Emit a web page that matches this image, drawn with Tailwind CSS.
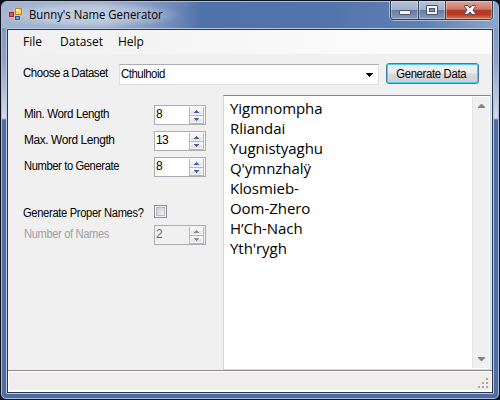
<!DOCTYPE html>
<html lang="en">
<head>
<meta charset="utf-8">
<title>Bunny's Name Generator</title>
<script src="https://cdn.jsdelivr.net/npm/@tailwindcss/browser@4"></script>
</head>
<body class="bg-[#10131c] w-[500px] h-[400px] overflow-hidden font-['Liberation_Sans',Arial,sans-serif] text-[12px] text-black">
<svg class="hidden">
  <symbol id="spin" viewBox="0 0 15 17">
    <rect x="0" y="0" width="15" height="17" fill="#b4b6ba"/>
    <rect x="1" y="0" width="13" height="8" fill="#f6f6f7"/>
    <rect x="1" y="9" width="13" height="7" fill="#f6f6f7"/>
    <rect x="2" y="4" width="11" height="3" fill="#e4e5e8"/>
    <rect x="2" y="12" width="11" height="3" fill="#e4e5e8"/>
    <path d="M7 3h1v1h1v1h1v1H5V5h1V4h1zM5 11h5v1H9v1H8v1H7v-1H6v-1H5z" fill="currentColor"/>
  </symbol>
</svg>
<div class="w-[500px] h-[400px] rounded-t-[7px] rounded-b-[6px] border border-[#10131c] bg-[#4d6da3] overflow-hidden">
<div class="w-[498px] h-[398px] rounded-t-[6px] rounded-b-[5px] border border-[#a9bddb] bg-[linear-gradient(to_bottom,#7e9bc7_0,#829bc4_28px,#8fa2c6_60px,#d5dce9_116px,#4d6da3_118px,#4d6da3_100%)] flex flex-col">
  <header class="h-[26px] flex items-start rounded-t-[5px] bg-[linear-gradient(to_right,#a3b5d1_0,#9fb1ce_100px,#7690bd_165px,#4f71aa_200px,#5375ad_330px,#5f80b5_420px,#8ba5ca_496px)]">
    <div class="w-[180px] h-[26px] pl-[7px] flex items-center bg-[radial-gradient(ellipse_at_50%_50%,#ffffff66_0,#ffffff44_45%,#ffffff00_72%)]">
      <svg class="w-[14px] h-[14px] shrink-0" viewBox="0 0 14 14">
        <rect x="0" y="0" width="14" height="13" fill="#c3c7cc"/>
        <path d="M0 0h5v4H0zM0 10h5v3H0zM12 9h2v4h-2z" fill="#b3b6ba"/>
        <rect x="0" y="4" width="5" height="5" fill="#a82020"/><rect x="1" y="5" width="3" height="3" fill="#dc5a4e"/>
        <rect x="6" y="0" width="7" height="7" fill="#bb8a16"/><rect x="7" y="1" width="5" height="5" fill="#fbd55b"/><rect x="7" y="1" width="3" height="2" fill="#fff0a8"/>
        <rect x="6" y="8" width="5" height="4" fill="#2457b5"/><rect x="7" y="9" width="3" height="2" fill="#6e9df0"/>
      </svg>
      <h1 class="ml-[6px] text-[12px] leading-[16px] origin-left scale-x-[.945] whitespace-nowrap font-['Open_Sans','Noto_Sans',sans-serif]">Bunny's Name Generator</h1>
    </div>
    <div class="ml-[208px] -mt-px flex h-[19px] w-[103px] border border-t-0 border-[#333e55] rounded-b-[4px] shadow-[0_0_0_1px_#ffffff77] overflow-hidden">
      <div class="w-[28px] border-r border-[#3c4963] bg-[linear-gradient(to_bottom,#b6c4d8_0,#a0b0cb_48%,#67799c_50%,#879dbd_100%)] shadow-[inset_0_0_0_1px_#ffffff55]">
        <svg width="27" height="18"><rect x="8.5" y="9.5" width="11" height="4" rx=".7" fill="#f5f5f5" stroke="#4b546b"/></svg>
      </div>
      <div class="w-[27px] border-r border-[#3c4963] bg-[linear-gradient(to_bottom,#b6c4d8_0,#a0b0cb_48%,#67799c_50%,#879dbd_100%)] shadow-[inset_0_0_0_1px_#ffffff55]">
        <svg width="26" height="18"><path d="M7.500 4.500h11v9h-11z" fill="#f5f5f5" stroke="#4b546b"/><rect x="10.500" y="7.500" width="5" height="3" fill="#8294b3" stroke="#4b546b"/></svg>
      </div>
      <div class="flex-1 bg-[linear-gradient(to_bottom,#dfa498_0,#cf7868_46%,#b63a27_50%,#b23c25_75%,#d67c59_100%)] shadow-[inset_0_0_0_1px_#ffffff55]">
        <svg width="46" height="18"><path d="M18.500 4.500h3.500l2 2.500 2-2.500h3.500v1L27 9l2.500 3.500v1H26l-2-2.500-2 2.500h-3.500v-1L21 9l-2.500-3.500z" fill="#f7f5f5" stroke="#51475a"/></svg>
      </div>
    </div>
  </header>
  <main class="mx-[4px] mb-[4px] h-[366px] border border-[#b9c9df] rounded-[1px]">
  <div class="h-[364px] border border-[#29344b] bg-[#f0f0f0] flex flex-col">
    <nav class="h-[24px] shrink-0 flex items-center pl-[15px] bg-[linear-gradient(to_right,#f0f0f0,#fcfcfc_80%)] font-['Open_Sans','Noto_Sans',sans-serif] text-[12px]">
      <span class="w-[37px]">File</span><span class="w-[58px]">Dataset</span><span>Help</span>
    </nav>
    <div class="h-[41px] shrink-0 flex pl-[15px] pt-[9px]">
      <label class="w-[96px] pt-[2px] leading-[16px] tracking-[-0.45px] origin-left scale-x-[.955] whitespace-nowrap">Choose a Dataset</label>
      <div class="w-[260px] h-[21px] mt-px bg-white border border-[#dedfe2] border-t-[#abadb3] flex items-start justify-between pl-px pr-[4px]">
        <span class="leading-[18px] tracking-[-0.5px] origin-left scale-x-[.95]">Cthulhoid</span>
        <svg class="mt-[8px]" width="8" height="4"><path d="M0 0h7v1H6v1H5v1H4v1H3V3H2V2H1V1H0z"/></svg>
      </div>
      <button class="ml-[7px] w-[93px] h-[21px] rounded-[3px] border border-[#3c7fb1] shadow-[inset_0_0_0_1px_#48cdf2] bg-[linear-gradient(to_bottom,#f2f2f2_0,#ebebeb_48%,#dadada_52%,#cfcfcf_100%)] leading-[18px] tracking-[-0.33px] whitespace-nowrap"><span class="inline-block -ml-[3px] scale-x-[.94]">Generate Data</span></button>
    </div>
    <div class="flex h-[275px] shrink-0">
      <section class="w-[215px] pl-[16px] pt-[10px]">
        <div class="flex h-[26px]"><label class="w-[130px] pt-px leading-[16px] tracking-[-0.4px]"><span class="inline-block origin-left scale-x-[.965]">Min. Word Length</span></label>
          <div class="w-[52px] h-[20px] bg-white border border-[#abadb3] flex justify-between pl-px pr-px pt-px"><span class="leading-[15px]">8</span><svg class="w-[15px] h-[17px] text-[#4a5fa5]"><use href="#spin"/></svg></div></div>
        <div class="flex h-[26px]"><label class="w-[130px] pt-px leading-[16px] tracking-[-0.4px]"><span class="inline-block origin-left scale-x-[.99]">Max. Word Length</span></label>
          <div class="w-[52px] h-[20px] bg-white border border-[#abadb3] flex justify-between pl-px pr-px pt-px"><span class="leading-[15px] tracking-[-0.6px]">13</span><svg class="w-[15px] h-[17px] text-[#4a5fa5]"><use href="#spin"/></svg></div></div>
        <div class="flex h-[46px]"><label class="w-[130px] pt-px leading-[16px] tracking-[-0.4px]"><span class="inline-block origin-left scale-x-[.93]">Number to Generate</span></label>
          <div class="w-[52px] h-[20px] bg-white border border-[#abadb3] flex justify-between pl-px pr-px pt-px"><span class="leading-[15px]">8</span><svg class="w-[15px] h-[17px] text-[#4a5fa5]"><use href="#spin"/></svg></div></div>
        <div class="flex h-[22px] -ml-px pt-[2px]"><label class="w-[131px] leading-[16px] tracking-[-0.35px] whitespace-nowrap"><span class="inline-block origin-left scale-x-[.93]">Generate Proper Names?</span></label>
          <div class="w-[13px] h-[13px] border border-[#8e8f8f] bg-[#f4f4f4] p-px"><div class="w-[9px] h-[9px] border border-[#b5b9c0] bg-[linear-gradient(135deg,#c8ccd3,#f5f5f5)]"></div></div></div>
        <div class="flex h-[26px] text-[#a0a0a0]"><label class="w-[130px] pt-px leading-[16px] tracking-[-0.4px]"><span class="inline-block origin-left scale-x-[.93]">Number of Names</span></label>
          <div class="w-[52px] h-[20px] border border-[#abadb3] flex justify-between pl-px pr-px pt-px"><span class="leading-[15px] text-[#6d6d6d]">2</span><svg class="w-[15px] h-[17px] text-[#8a8a8a]"><use href="#spin"/></svg></div></div>
      </section>
      <section class="w-[268px] h-[275px] bg-white border border-[#c5daed] border-t-[#5794bf] border-r-[#b7d5ea] flex justify-between">
        <div class="pl-[6px] pt-[2px] font-['Open_Sans','Noto_Sans',sans-serif] text-[15px] leading-[20px] whitespace-nowrap tracking-[-0.05px]">
          <p>Yigmnompha</p><p>Rliandai</p><p>Yugnistyaghu</p><p>Q'ymnzhalÿ</p><p>Klosmieb-</p><p>Oom-Zhero</p><p>H’Ch-Nach</p><p>Yth'rygh</p>
        </div>
        <div class="w-[17px] mt-px mr-px mb-px bg-[#f0f0f0] border-l border-[#e3e3e3] flex flex-col items-center justify-between py-[7px]">
          <svg width="7" height="4"><path d="M3 0h1l3 3v1H0V3z" fill="#858585"/></svg>
          <svg width="7" height="4"><path d="M0 0h7v1L4 4H3L0 1z" fill="#858585"/></svg>
        </div>
      </section>
    </div>
    <footer class="h-[22px] shrink-0 border-t border-[#858a8e] bg-white p-px">
      <div class="h-[18px] bg-[#f1edec] flex justify-end items-end pr-[2px] pb-px">
        <svg width="11" height="11" fill="#aaa4a4"><path d="M8 0h2v2H8zM4 4h2v2H4zM8 4h2v2H8zM0 8h2v2H0zM4 8h2v2H4zM8 8h2v2H8z"/></svg>
      </div>
    </footer>
  </div>
  </main>
</div>
</div>
</body>
</html>
